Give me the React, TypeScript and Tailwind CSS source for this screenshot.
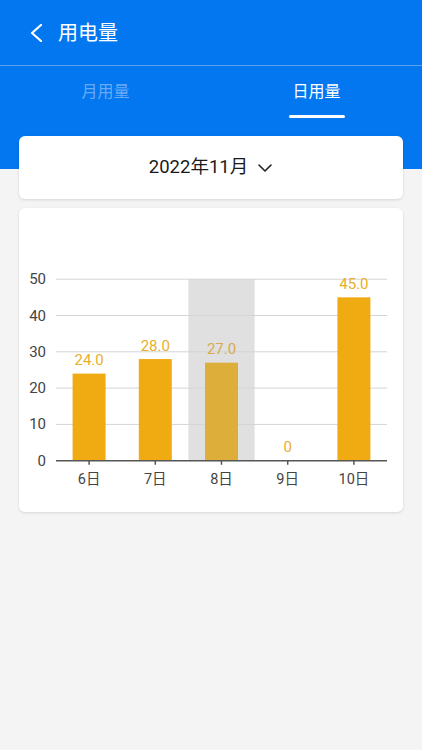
import { FC } from 'react'

interface DayUsage {
  label: string
  value: number
}

const data: DayUsage[] = [
  { label: '6日', value: 24 },
  { label: '7日', value: 28 },
  { label: '8日', value: 27 },
  { label: '9日', value: 0 },
  { label: '10日', value: 45 },
]

const activeIndex = 2

// chart geometry, in card pixels
const left = 37
const right = 368
const zeroY = 252.7
const unit = 3.63
const slot = (right - left) / data.length
const barWidth = 33

const fontStack = 'Roboto, "Noto Sans CJK SC", sans-serif'

const Chart: FC = () => {
  const y = (v: number) => zeroY - v * unit

  return (
    <svg width="384" height="304" viewBox="0 0 384 304" className="block">
      <rect x={left + slot * activeIndex} y={y(50)} width={slot} height={zeroY - y(50)} fill="#e0e0e0" />

      {[10, 20, 30, 40, 50].map((v) => (
        <line key={v} x1={left} x2={right} y1={y(v)} y2={y(v)} stroke="#d4d4d4" strokeWidth="1" />
      ))}

      {[0, 10, 20, 30, 40, 50].map((v) => (
        <text
          key={v}
          x="27"
          y={y(v)}
          textAnchor="end"
          dominantBaseline="central"
          fontSize="15"
          fill="#444"
          style={{ fontFamily: fontStack }}
        >
          {v}
        </text>
      ))}

      {data.map((d, i) => {
        const cx = left + slot * i + slot / 2
        const active = i === activeIndex
        return (
          <g key={d.label}>
            {d.value > 0 && (
              <rect
                x={cx - barWidth / 2}
                y={y(d.value)}
                width={barWidth}
                height={d.value * unit}
                fill={active ? '#ddae3a' : '#f0ab13'}
              />
            )}
            <text
              x={cx}
              y={y(d.value) - 8.5}
              textAnchor="middle"
              fontSize="15"
              fill={active ? '#d8aa4c' : '#e9ae2c'}
              style={{ fontFamily: fontStack }}
            >
              {d.value === 0 ? '0' : d.value.toFixed(1)}
            </text>
            <line x1={cx} x2={cx} y1={zeroY} y2={zeroY + 4} stroke="#555" strokeWidth="1.5" />
            <text
              x={cx}
              y="271"
              textAnchor="middle"
              dominantBaseline="central"
              fontSize="14.5"
              fill="#444"
              style={{ fontFamily: fontStack }}
            >
              {d.label}
            </text>
          </g>
        )
      })}

      <line x1={left} x2={right} y1={zeroY} y2={zeroY} stroke="#555" strokeWidth="1.5" />
    </svg>
  )
}

const App: FC = () => {
  return (
    <div
      className="min-h-[750px] w-[422px] bg-[#f4f4f4]"
      style={{ fontFamily: fontStack }}
    >
      <div className="bg-[#0377f0] pb-[33px]">
        <div className="flex h-[66px] items-center border-b border-[#5da2f1]">
          <button className="ml-[29px] flex h-[20px] w-[16px] items-center">
            <svg width="14" height="18" viewBox="0 0 14 18" fill="none">
              <polyline
                points="12,1 3,9 12,17"
                stroke="#fff"
                strokeWidth="2.2"
                strokeLinecap="round"
                strokeLinejoin="round"
              />
            </svg>
          </button>
          <h1 className="ml-[13px] text-[20px] leading-none text-white">用电量</h1>
        </div>

        <div className="grid h-[70px] grid-cols-2">
          <div className="flex flex-col items-center pt-[15px]">
            <span className="text-[16px] leading-[22px] text-[#6aaaf5]">月用量</span>
          </div>
          <div className="flex flex-col items-center pt-[15px]">
            <span className="text-[16px] leading-[22px] text-white">日用量</span>
            <div className="mt-[12px] h-[3px] w-[56px] rounded-full bg-white" />
          </div>
        </div>
      </div>

      <div className="mx-[19px] -mt-[33px] flex h-[63px] items-center justify-center rounded-md bg-white shadow-[0_1px_3px_rgba(0,0,0,0.12)]">
        <span className="text-[18.5px] text-[#1a1a1a]">2022年11月</span>
        <svg className="ml-[9px]" width="16" height="10" viewBox="0 0 16 10" fill="none">
          <polyline
            points="2,2 8,8 14,2"
            stroke="#222"
            strokeWidth="1.6"
            strokeLinecap="round"
            strokeLinejoin="round"
          />
        </svg>
      </div>

      <div className="mx-[19px] mt-[9px] h-[304px] overflow-hidden rounded-md bg-white shadow-[0_1px_3px_rgba(0,0,0,0.12)]">
        <Chart />
      </div>
    </div>
  )
}

export default App
